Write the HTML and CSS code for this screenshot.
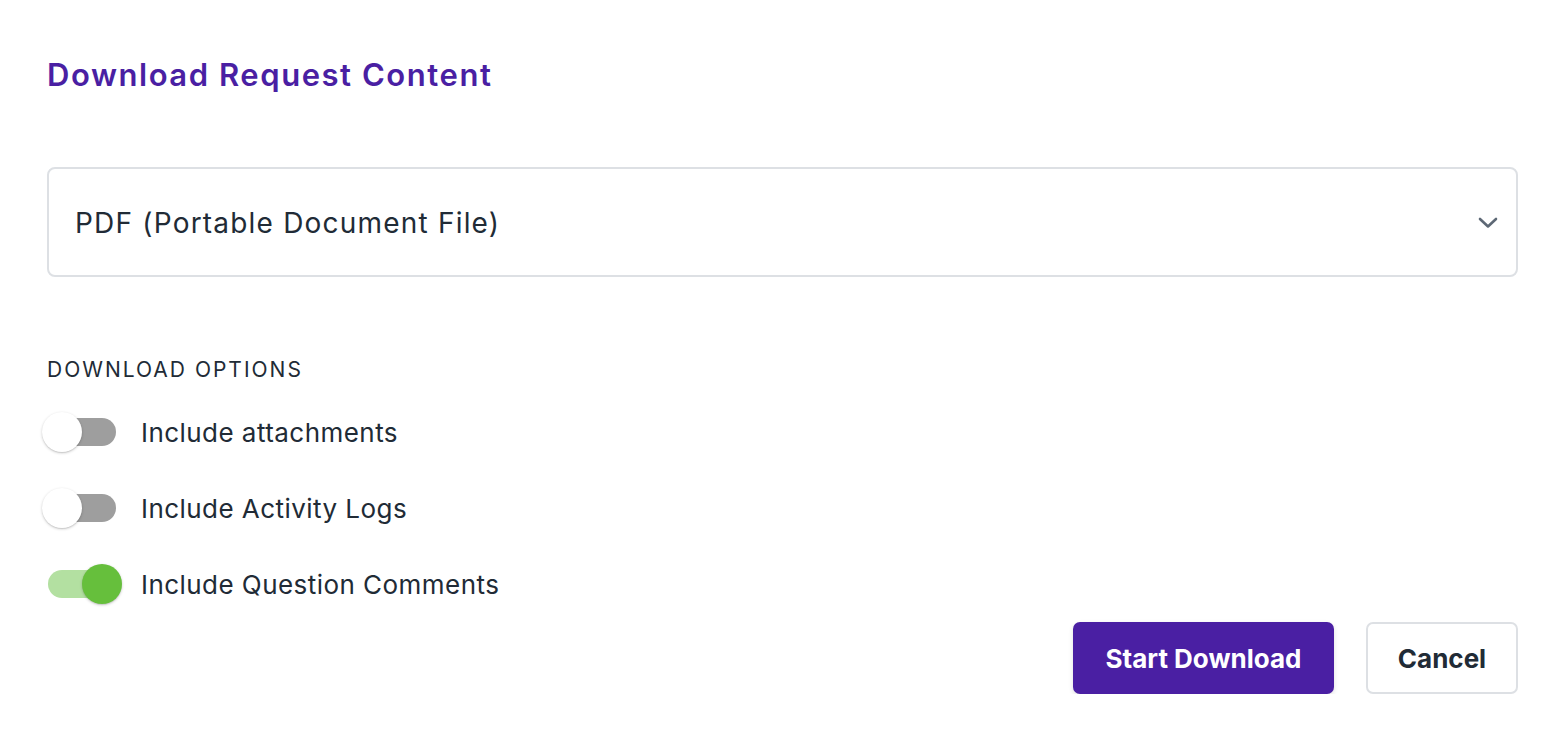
FILE: index.html
```html
<!DOCTYPE html>
<html>
<head>
<meta charset="utf-8">
<link rel="stylesheet" href="styles.css">
</head>
<body>
<div class="dialog">
  <h1 class="title">Download Request Content</h1>
  <div class="select">
    <span class="select-value">PDF (Portable Document File)</span>
    <svg class="chevron" width="20" height="12" viewBox="0 0 20 12"><path d="M2 2 L10 9.5 L18 2" fill="none" stroke="#5d6875" stroke-width="2.6" stroke-linecap="round" stroke-linejoin="round"/></svg>
  </div>
  <div class="section-label">DOWNLOAD OPTIONS</div>
  <div class="options">
    <div class="option">
      <span class="switch"><span class="track"></span><span class="knob"></span></span>
      <span class="option-label">Include attachments</span>
    </div>
    <div class="option">
      <span class="switch"><span class="track"></span><span class="knob"></span></span>
      <span class="option-label">Include Activity Logs</span>
    </div>
    <div class="option">
      <span class="switch on"><span class="track"></span><span class="knob"></span></span>
      <span class="option-label">Include Question Comments</span>
    </div>
  </div>
  <div class="actions">
    <button class="btn primary">Start Download</button>
    <button class="btn secondary">Cancel</button>
  </div>
</div>
</body>
</html>
```
FILE: styles.css
```css
html, body {
  margin: 0;
  padding: 0;
  background: #ffffff;
}
body {
  font-family: Inter, "Noto Sans", sans-serif;
  color: #212b36;
}
.dialog {
  padding: 56px 42px 0 47px;
  display: flex;
  flex-direction: column;
}
.title {
  margin: 0;
  font-size: 31px;
  line-height: 38px;
  font-weight: 600;
  color: #4a1fa3;
  letter-spacing: 1.55px;
}
.select {
  box-sizing: border-box;
  margin-top: 73px;
  height: 110px;
  border: 2px solid #dde0e4;
  border-radius: 8px;
  display: flex;
  align-items: center;
  justify-content: space-between;
  padding: 2px 18px 0 26px;
}
.select-value {
  font-size: 28px;
  letter-spacing: 1.2px;
  color: #212b36;
}
.chevron {
  display: block;
}
.section-label {
  margin-top: 80px;
  font-size: 21px;
  line-height: 26px;
  letter-spacing: 2px;
  color: #212b36;
}
.options {
  margin-top: 29px;
  display: flex;
  flex-direction: column;
  gap: 36px;
}
.option {
  display: flex;
  align-items: center;
  height: 40px;
}
.switch {
  position: relative;
  width: 68px;
  height: 40px;
  margin-left: 1px;
  flex: none;
}
.track {
  position: absolute;
  left: 0;
  top: 6px;
  width: 68px;
  height: 28px;
  border-radius: 14px;
  background: #9e9e9e;
}
.knob {
  position: absolute;
  left: -6px;
  top: 0;
  width: 40px;
  height: 40px;
  border-radius: 50%;
  background: #ffffff;
  box-shadow: 0 1px 3px rgba(0,0,0,0.2), 0 1px 1px rgba(0,0,0,0.08);
}
.switch.on .track {
  background: #b3e0a1;
}
.switch.on .knob {
  left: 34px;
  background: #66bf3c;
}
.option-label {
  margin-left: 25px;
  font-size: 26px;
  letter-spacing: 0.45px;
  color: #212b36;
}
.actions {
  margin-top: 18px;
  display: flex;
  justify-content: flex-end;
  gap: 32px;
}
.btn {
  height: 72px;
  border-radius: 7px;
  font-family: Inter, "Noto Sans", sans-serif;
  font-size: 26px;
  font-weight: 700;
  cursor: pointer;
}
.btn.primary {
  width: 261px;
  background: #4a1fa3;
  color: #ffffff;
  border: none;
  box-shadow: 0 2px 5px rgba(0,0,0,0.12);
}
.btn.secondary {
  width: 152px;
  background: #ffffff;
  color: #212b36;
  border: 2px solid #dde0e4;
}
```
